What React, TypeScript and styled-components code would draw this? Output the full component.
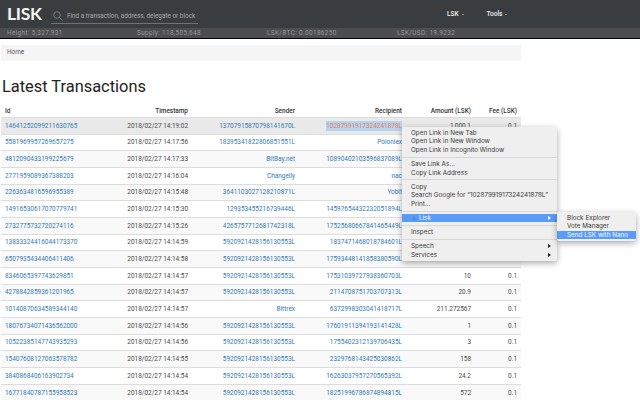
import React from 'react'
import styled, { createGlobalStyle } from 'styled-components'

const GlobalStyle = createGlobalStyle`
    html, body {
        margin: 0;
        height: 400px;
        overflow: hidden;
        background: #ffffff;
        font-family: Roboto, "Liberation Sans", sans-serif;
    }
`

const Page = styled.div`
    position: relative;
    width: 640px;
    height: 400px;
    overflow: hidden;
`

const Header = styled.header`
    height: 28px;
    background: #3a3d40;
    display: flex;
    align-items: center;
    padding: 0 0 0 7px;
`

const Logo = styled.div`
    width: 35px;
    margin-right: 9px;
    font-family: Lato, Roboto, sans-serif;
    font-size: 17.5px;
    font-weight: 700;
    line-height: 28px;
    color: #f4f4f4;
    letter-spacing: -0.3px;
`

const SearchBox = styled.div`
    width: 147px;
    height: 20px;
    box-sizing: border-box;
    border-bottom: 1px solid #6f7173;
    display: flex;
    align-items: center;
    gap: 4px;
    padding: 4px 0 0 2px;
`

const SearchText = styled.span`
    font-size: 6.4px;
    color: #a9abad;
    white-space: nowrap;
`

const Nav = styled.nav`
    margin-left: 249px;
    display: flex;
    gap: 23px;
`

const NavItem = styled.span`
    font-size: 6.5px;
    font-weight: 500;
    color: #f2f2f2;
    display: flex;
    align-items: center;
    gap: 3px;
`

const Caret = styled.i`
    width: 0;
    height: 0;
    border-left: 1.7px solid transparent;
    border-right: 1.7px solid transparent;
    border-top: 1.7px solid #e0e0e0;
`

const StatusBar = styled.div`
    height: 10px;
    background: #4c4d4e;
    border-bottom: 1px solid #000000;
    display: grid;
    grid-template-columns: 130px 130px 130px auto;
    padding-left: 7px;
    font-size: 6.4px;
    line-height: 10px;
    letter-spacing: 0.36px;
    color: #9a9c9e;
`

const Breadcrumb = styled.div`
    margin: 6px 0 0 1px;
    width: 520px;
    height: 16px;
    background: #f5f5f5;
    border-radius: 1px;
    box-sizing: border-box;
    padding-left: 6px;
    font-size: 6.4px;
    line-height: 15px;
    color: #555555;
`

const Title = styled.h1`
    margin: 15px 0 0 2px;
    font-size: 16.4px;
    font-weight: 400;
    line-height: 22px;
    color: #222222;
`

const Table = styled.table`
    margin: 6px 0 0 1px;
    width: 520px;
    table-layout: fixed;
    border-collapse: collapse;
    font-size: 6.45px;
    color: #4a4a4a;
`

const HeadCell = styled.th<{ $left?: boolean }>`
    height: 13px;
    padding: 0 4px;
    font-weight: 500;
    text-align: ${p => (p.$left ? 'left' : 'right')};
    color: #333333;
    white-space: nowrap;
`

const Row = styled.tr<{ $tone: 'hover' | 'odd' | 'even' }>`
    height: 16.66px;
    background: ${p => (p.$tone === 'hover' ? '#e9e9e9' : p.$tone === 'odd' ? '#f9f9f9' : '#ffffff')};
    border-top: 1px solid #dddddd;
`

const Cell = styled.td<{ $left?: boolean }>`
    padding: 0 4px;
    text-align: ${p => (p.$left ? 'left' : 'right')};
    white-space: nowrap;
    overflow: visible;
`

const TxLink = styled.a`
    color: #337ab7;
    text-decoration: none;
`

const SelectedLink = styled.a`
    color: #e9804a;
    background: #b5d3f3;
    padding: 1px 0;
`

const Menu = styled.div<{ $sub?: boolean }>`
    position: absolute;
    left: ${p => (p.$sub ? '557px' : '402px')};
    top: ${p => (p.$sub ? '212px' : '127px')};
    width: ${p => (p.$sub ? '79px' : '155px')};
    box-sizing: border-box;
    padding: 1.7px 0 1.4px;
    background: #efefef;
    border-radius: 2px;
    box-shadow: 0 2px 6px rgba(0, 0, 0, 0.35);
    font-family: Inter, "Liberation Sans", sans-serif;
    font-size: 6.35px;
    color: #3a3a3a;
`

const MenuItem = styled.div<{ $active?: boolean; $sub?: boolean }>`
    height: 8.6px;
    line-height: 8.6px;
    padding: 0 6px 0 ${p => (p.$sub ? '10px' : '9px')};
    display: flex;
    align-items: center;
    justify-content: space-between;
    background: ${p => (p.$active ? '#5a9bf7' : 'transparent')};
    color: ${p => (p.$active ? '#f6f9ff' : 'inherit')};
    white-space: nowrap;
`

const Separator = styled.div`
    height: 1px;
    margin: 2.2px 0 2.3px;
    background: #d8d8d8;
`

const Arrow = styled.i<{ $light?: boolean }>`
    width: 0;
    height: 0;
    border-top: 2px solid transparent;
    border-bottom: 2px solid transparent;
    border-left: 3px solid ${p => (p.$light ? '#ffffff' : '#222222')};
`

const ItemLabel = styled.span`
    display: flex;
    align-items: center;
    gap: 2px;
`

type Tx = { id: string; time: string; sender: string; recipient: string; amount?: string; fee?: string }

const bulk = '5920921428156130553L'

// amount and fee of rows 1-7 sit behind the context menu
const rows: Tx[] = [
    { id: '14641252099211630765', time: '14:19:02', sender: '13707915870798141670L', recipient: '10287991917324241878L', amount: '1,000.1', fee: '0.1' },
    { id: '5581969957269657275', time: '14:17:56', sender: '18395341822806851551L', recipient: 'Poloniex' },
    { id: '4812090433199225679', time: '14:17:33', sender: 'BitBay.net', recipient: '10890402103596837089L' },
    { id: '2771959089367388203', time: '14:16:04', sender: 'Changelly', recipient: 'nac' },
    { id: '2263634816596955389', time: '14:15:48', sender: '3641103027128210871L', recipient: 'Yobit' },
    { id: '14916530617070779741', time: '14:15:30', sender: '129353455216739446L', recipient: '14597654432232051894L' },
    { id: '2732775732720274116', time: '14:15:26', sender: '4265757712681742318L', recipient: '17525680667841465449L' },
    { id: '13833324416044173370', time: '14:14:59', sender: bulk, recipient: '1837471468018784601L' },
    { id: '6507935434406411406', time: '14:14:58', sender: bulk, recipient: '17593448141858380590L', amount: '10', fee: '0.1' },
    { id: '8346065397743629851', time: '14:14:57', sender: bulk, recipient: '17531039727938360703L', amount: '10', fee: '0.1' },
    { id: '4278842859361201965', time: '14:14:57', sender: bulk, recipient: '2114708751703707313L', amount: '20.9', fee: '0.1' },
    { id: '10140870634589344140', time: '14:14:57', sender: 'Bittrex', recipient: '6372998303041418717L', amount: '211.272567', fee: '0.1' },
    { id: '18076734071436562000', time: '14:14:56', sender: bulk, recipient: '17601911394193141428L', amount: '1', fee: '0.1' },
    { id: '10522385147743935293', time: '14:14:56', sender: bulk, recipient: '1755402312139706435L', amount: '3', fee: '0.1' },
    { id: '15407608127063578782', time: '14:14:55', sender: bulk, recipient: '2329768143425030862L', amount: '158', fee: '0.1' },
    { id: '3840868406163902734', time: '14:14:54', sender: bulk, recipient: '16263037957270565392L', amount: '24.2', fee: '0.1' },
    { id: '16771840787155958523', time: '14:14:54', sender: bulk, recipient: '18251996786874894815L', amount: '572', fee: '0.1' },
]

const SearchIcon = () => (
    <svg width="10" height="10" viewBox="0 0 10 10" fill="none" stroke="#8e9194" strokeWidth="0.7">
        <circle cx="4" cy="4" r="3.3" />
        <path d="M6.4 6.4 L9.6 9.6" />
    </svg>
)

const LiskGlyph = () => (
    <svg width="6" height="6" viewBox="0 0 6 6">
        <path d="M3 0.5 L5.5 4.5 L3 5.5 L0.5 4.5 Z" fill="#4a8fe8" />
    </svg>
)

const App: React.FC = () => {
    return (
        <Page>
            <GlobalStyle />
            <Header>
                <Logo>LISK</Logo>
                <SearchBox>
                    <SearchIcon />
                    <SearchText>Find a transaction, address, delegate or block</SearchText>
                </SearchBox>
                <Nav>
                    <NavItem>LSK <Caret /></NavItem>
                    <NavItem>Tools <Caret /></NavItem>
                </Nav>
            </Header>
            <StatusBar>
                <span>Height: 5,327,931</span>
                <span>Supply: 118,505,648</span>
                <span>LSK/BTC: 0.00186250</span>
                <span>LSK/USD: 19.9232</span>
            </StatusBar>
            <Breadcrumb>Home</Breadcrumb>
            <Title>Latest Transactions</Title>
            <Table>
                <colgroup>
                    <col style={{ width: 100 }} />
                    <col style={{ width: 91 }} />
                    <col style={{ width: 107 }} />
                    <col style={{ width: 107 }} />
                    <col style={{ width: 69 }} />
                    <col style={{ width: 46 }} />
                </colgroup>
                <thead>
                    <tr>
                        <HeadCell $left>Id</HeadCell>
                        <HeadCell>Timestamp</HeadCell>
                        <HeadCell>Sender</HeadCell>
                        <HeadCell>Recipient</HeadCell>
                        <HeadCell>Amount (LSK)</HeadCell>
                        <HeadCell>Fee (LSK)</HeadCell>
                    </tr>
                </thead>
                <tbody>
                    {rows.map((tx, i) => (
                        <Row key={tx.id} $tone={i === 0 ? 'hover' : i % 2 === 0 ? 'odd' : 'even'}>
                            <Cell $left><TxLink>{tx.id}</TxLink></Cell>
                            <Cell>2018/02/27 {tx.time}</Cell>
                            <Cell><TxLink>{tx.sender}</TxLink></Cell>
                            <Cell>
                                {i === 0
                                    ? <SelectedLink>{tx.recipient}</SelectedLink>
                                    : <TxLink>{tx.recipient}</TxLink>}
                            </Cell>
                            <Cell>{tx.amount}</Cell>
                            <Cell>{tx.fee}</Cell>
                        </Row>
                    ))}
                </tbody>
            </Table>
            <Menu>
                <MenuItem>Open Link in New Tab</MenuItem>
                <MenuItem>Open Link in New Window</MenuItem>
                <MenuItem>Open Link in Incognito Window</MenuItem>
                <Separator />
                <MenuItem>Save Link As...</MenuItem>
                <MenuItem>Copy Link Address</MenuItem>
                <Separator />
                <MenuItem>Copy</MenuItem>
                <MenuItem>Search Google for “10287991917324241878L”</MenuItem>
                <MenuItem>Print...</MenuItem>
                <Separator />
                <MenuItem $active>
                    <ItemLabel><LiskGlyph />Lisk</ItemLabel>
                    <Arrow $light />
                </MenuItem>
                <Separator />
                <MenuItem>Inspect</MenuItem>
                <Separator />
                <MenuItem>Speech <Arrow /></MenuItem>
                <MenuItem>Services <Arrow /></MenuItem>
            </Menu>
            <Menu $sub>
                <MenuItem $sub>Block Explorer</MenuItem>
                <MenuItem $sub>Vote Manager</MenuItem>
                <MenuItem $sub $active>Send LSK with Nano</MenuItem>
            </Menu>
        </Page>
    )
}

export default App
